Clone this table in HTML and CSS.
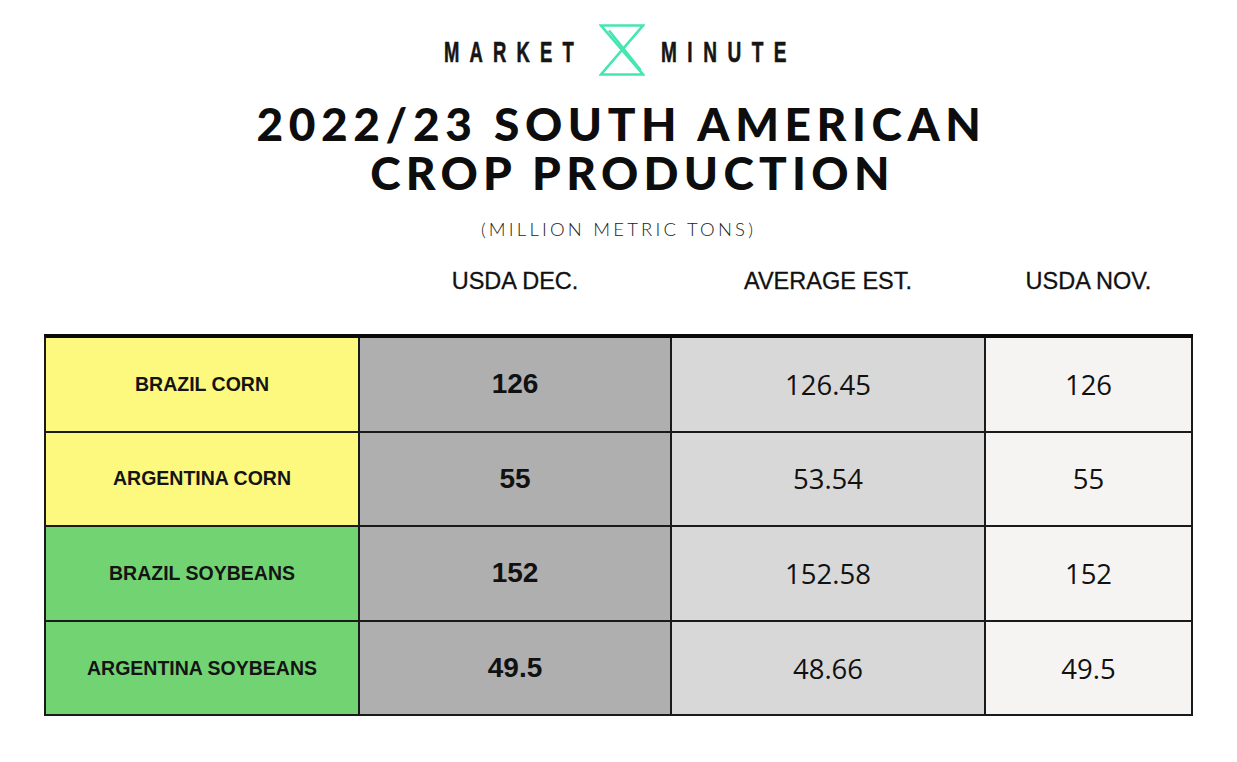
FILE: index.html
```html
<!DOCTYPE html>
<html>
<head>
<meta charset="utf-8">
<link rel="stylesheet" href="styles.css">
</head>
<body>
<div class="page">
  <header class="logo">
    <svg class="logo-word" width="140" height="30" viewBox="0 0 140 30">
      <text x="0" y="26" textLength="140" lengthAdjust="spacingAndGlyphs">MARKET</text>
    </svg>
    <svg class="logo-mark" width="46" height="54" viewBox="0 0 46 54" fill="none" stroke="#45e6b2" stroke-width="2.6" stroke-linejoin="miter">
      <path d="M2 2.5 H44 L2 51.5 H44 Z"/>
      <path d="M10 7.5 L41.5 47"/>
    </svg>
    <svg class="logo-word" width="136" height="30" viewBox="0 0 136 30">
      <text x="0" y="26" textLength="136" lengthAdjust="spacingAndGlyphs">MINUTE</text>
    </svg>
  </header>

  <h1 class="title"><span class="tline">2022/23 SOUTH AMERICAN</span><span class="tline second">CROP PRODUCTION</span></h1>
  <p class="subtitle">(MILLION METRIC TONS)</p>

  <div class="heads">
    <div></div>
    <div class="head">USDA DEC.</div>
    <div class="head">AVERAGE EST.</div>
    <div class="head">USDA NOV.</div>
  </div>

  <div class="grid">
    <div class="cell label corn">BRAZIL CORN</div>
    <div class="cell dec">126</div>
    <div class="cell avg">126.45</div>
    <div class="cell nov">126</div>

    <div class="cell label corn">ARGENTINA CORN</div>
    <div class="cell dec">55</div>
    <div class="cell avg">53.54</div>
    <div class="cell nov">55</div>

    <div class="cell label soy">BRAZIL SOYBEANS</div>
    <div class="cell dec">152</div>
    <div class="cell avg">152.58</div>
    <div class="cell nov">152</div>

    <div class="cell label soy">ARGENTINA SOYBEANS</div>
    <div class="cell dec">49.5</div>
    <div class="cell avg">48.66</div>
    <div class="cell nov">49.5</div>
  </div>
</div>
</body>
</html>
```

FILE: styles.css
```css
html, body {
  margin: 0;
  padding: 0;
  background: #ffffff;
}

.page {
  width: 1237px;
  height: 762px;
  padding-top: 24px;
  box-sizing: border-box;
  color: #111111;
}

.logo {
  display: flex;
  justify-content: center;
  align-items: center;
  height: 52px;
  padding-left: 4px;
}

.logo-word {
  display: block;
  overflow: visible;
  margin-top: 2px;
}

.logo-word text {
  font-family: "Liberation Sans", Arial, sans-serif;
  font-weight: bold;
  font-size: 29px;
  letter-spacing: 16px;
  fill: #151515;
  stroke: #151515;
  stroke-width: 0.6px;
}

.logo-mark {
  display: block;
  margin-left: 15px;
  margin-right: 16px;
}

.title {
  margin: 23px 0 0 0;
  text-align: center;
  font-family: Lato, "DejaVu Sans", sans-serif;
  font-weight: 900;
  font-size: 46px;
  line-height: 49px;
  letter-spacing: 5.6px;
  color: #0d0d0d;
  padding-left: 6px;
}

.tline {
  display: block;
}

.tline.second {
  letter-spacing: 5.3px;
  padding-left: 22px;
}

.subtitle {
  margin: 21px 0 0 0;
  text-align: center;
  font-family: Lato, "DejaVu Sans", sans-serif;
  font-weight: 300;
  font-size: 18.5px;
  line-height: 22px;
  letter-spacing: 3.2px;
  color: #222222;
}

.heads {
  display: grid;
  grid-template-columns: 314px 312px 314px 207px;
  margin: 28px 0 0 45px;
  height: 26px;
}

.head {
  text-align: center;
  font-family: "Liberation Sans", Arial, sans-serif;
  font-size: 23.5px;
  line-height: 26px;
  color: #111111;
  -webkit-text-stroke: 0.3px #111111;
}

.grid {
  display: grid;
  grid-template-columns: 314px 312px 314px 207px;
  grid-auto-rows: 94.6px;
  margin: 40px 0 0 44px;
  width: 1149px;
  border-top: 4px solid #0a0a0a;
  border-left: 2px solid #1a1a1a;
  box-sizing: border-box;
}

.cell {
  display: flex;
  align-items: center;
  justify-content: center;
  border-right: 2px solid #1a1a1a;
  border-bottom: 2px solid #1a1a1a;
}

.label {
  font-family: "Liberation Sans", Arial, sans-serif;
  font-weight: bold;
  font-size: 19.5px;
  color: #141414;
}

.corn { background: #fdf87e; }
.soy { background: #72d373; }

.dec {
  background: #afafaf;
  font-family: "Liberation Sans", Arial, sans-serif;
  font-weight: bold;
  font-size: 28px;
  color: #111111;
}

.avg, .nov {
  font-family: "Open Sans", "Noto Sans", sans-serif;
  font-size: 27.5px;
  color: #111111;
}

.avg { background: #d8d8d8; }
.nov { background: #f6f4f3; }
```
